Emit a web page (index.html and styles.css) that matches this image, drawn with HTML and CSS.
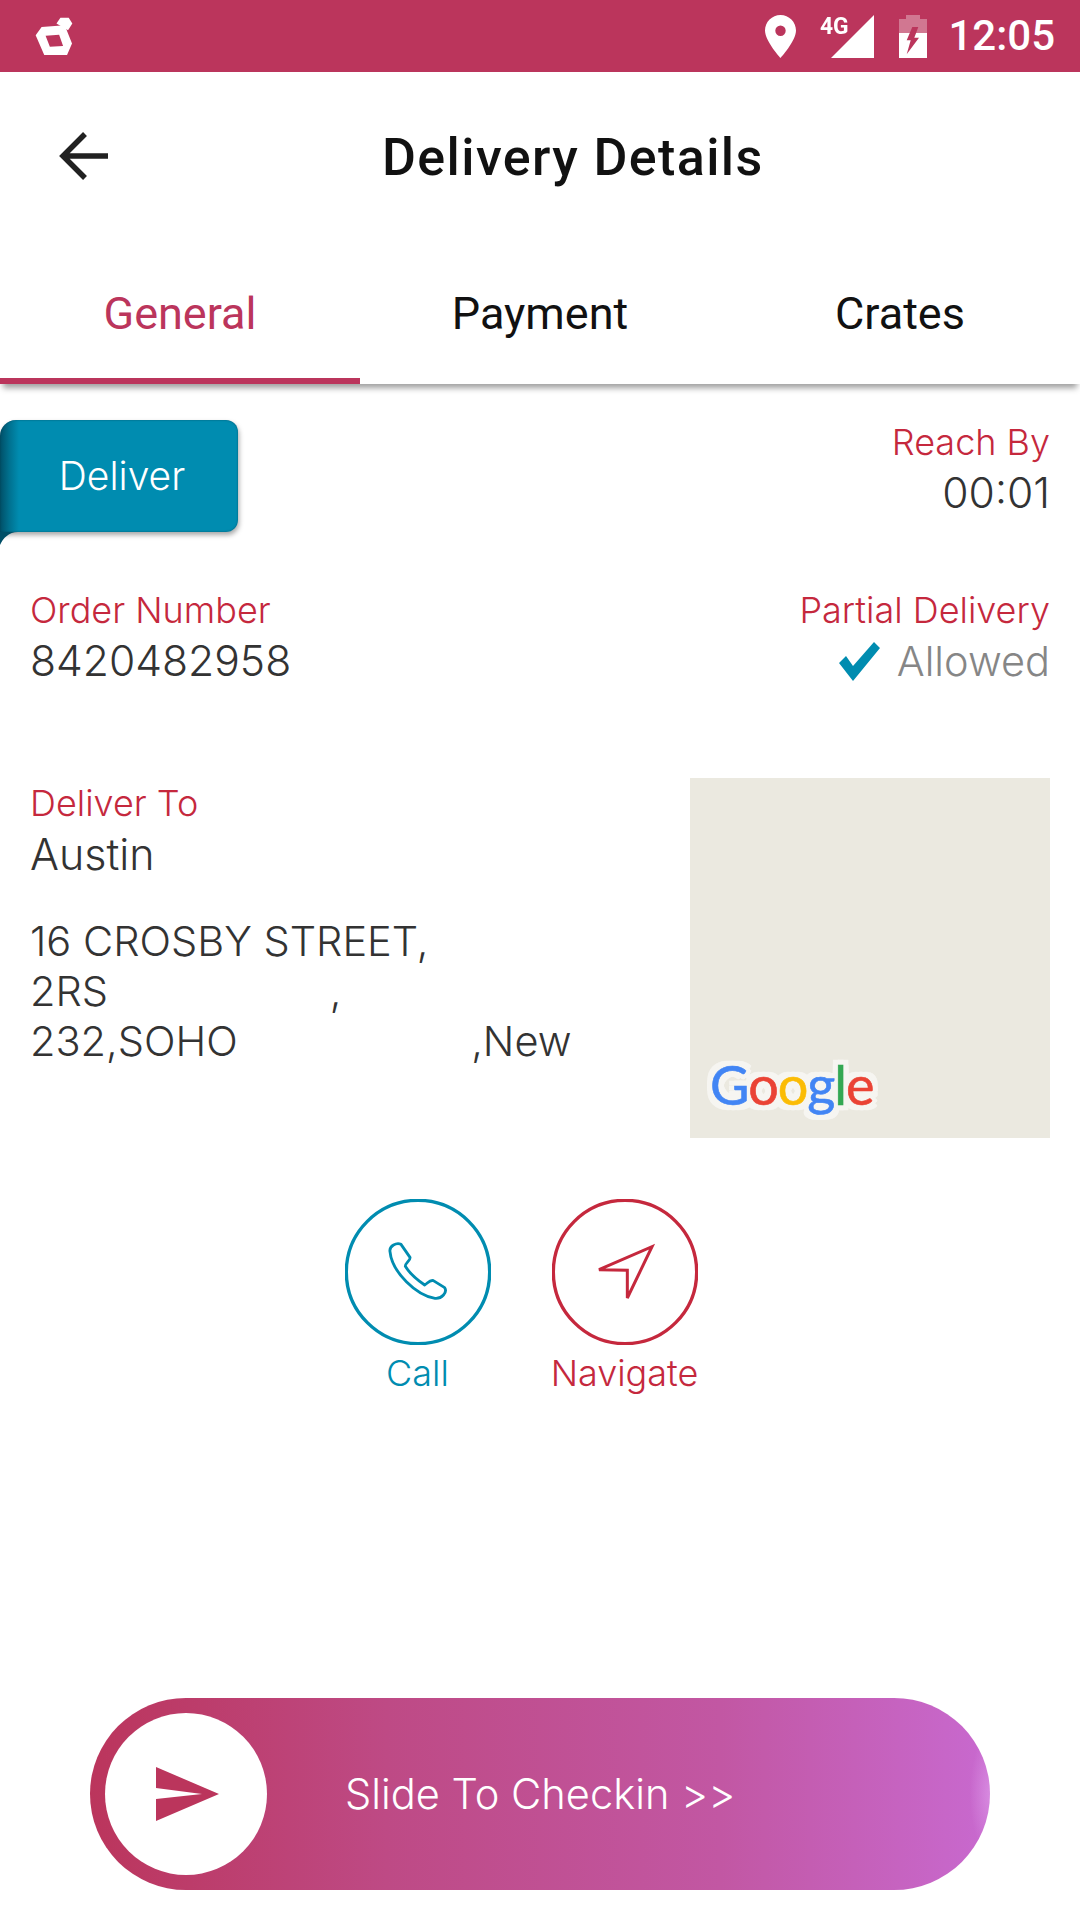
FILE: index.html
```html
<!DOCTYPE html>
<html lang="en">
<head>
<meta charset="utf-8">
<title>Delivery Details</title>
<link rel="stylesheet" href="styles.css">
</head>
<body>
<div class="screen">
  <header class="status-bar">
    <svg class="app-mark" viewBox="105 50 115 118" width="38" height="39">
      <path fill="#fff" fill-rule="evenodd" d="M107 105 L125 80 L195 75 L217 130 L202 165 L133 165 Z M137 107 L178 104 L190 138 L150 140 Z"/>
      <path fill="#fff" d="M170 70 L182 52 L207 52 L218 70 L205 90 Z"/>
    </svg>
    <span class="status-spacer"></span>
    <svg class="pin" viewBox="0 0 31 43" width="31" height="43">
      <path fill="#fff" fill-rule="evenodd" d="M15.5 0 C7 0 0 7 0 15.500 C0 26 15.500 43 15.500 43 C15.500 43 31 26 31 15.500 C31 7 24 0 15.500 0 Z M15.500 10.500 A5.200 5.200 0 1 1 15.500 20.900 A5.200 5.200 0 1 1 15.500 10.500 Z"/>
    </svg>
    <div class="signal">
      <span class="signal-label">4G</span>
      <svg class="signal-bars" viewBox="0 0 43 43" width="43" height="43"><path fill="#fff" d="M0 43 L43 0 L43 43 Z"/></svg>
    </div>
    <svg class="battery" viewBox="0 0 28 43" width="28" height="43">
      <path fill="#fff" opacity=".33" d="M0 4 H7 V0 H21 V4 H28 V18 H0 Z"/>
      <path fill="#fff" d="M0 18 H28 V43 H0 Z"/>
      <path fill="#bb355c" d="M13.300 12 H19.300 L15.300 22.700 H20 L7.700 39.300 L11.700 25.300 H7.700 Z"/>
    </svg>
    <span class="clock">12:05</span>
  </header>

  <div class="toolbar">
    <svg class="back" viewBox="0 0 52 48" width="52" height="48">
      <path fill="none" stroke="#212121" stroke-width="5.500" d="M50 24 H5 M27 2 L5 24 L27 46"/>
    </svg>
    <h1 class="title">Delivery Details</h1>
  </div>

  <nav class="tabs">
    <a class="tab tab-active">General</a>
    <a class="tab">Payment</a>
    <a class="tab">Crates</a>
  </nav>

  <main class="details">
    <section class="row-top">
      <div class="ribbon">Deliver</div>
      <div class="field field-end">
        <span class="label">Reach By</span>
        <span class="value value-digits">00:01</span>
      </div>
    </section>

    <section class="row-order">
      <div class="field">
        <span class="label">Order Number</span>
        <span class="value value-digits">8420482958</span>
      </div>
      <div class="field field-end">
        <span class="label">Partial Delivery</span>
        <span class="allowed">
          <svg class="tick" viewBox="0 0 41 39" width="41" height="39"><path fill="#008cb0" d="M0 21 L7 14 L14 24 L35 0 L41 6 L14 39 Z"/></svg>
          <span>Allowed</span>
        </span>
      </div>
    </section>

    <section class="row-address">
      <div class="address">
        <span class="label">Deliver To</span>
        <span class="value">Austin</span>
        <p class="street">16 CROSBY STREET,
2RS                   ,
232,SOHO                    ,New</p>
      </div>
      <div class="map">
        <span class="map-logo"><span class="g-blue">G</span><span class="g-red">o</span><span class="g-yellow">o</span><span class="g-blue">g</span><span class="g-green">l</span><span class="g-red">e</span></span>
      </div>
    </section>

    <section class="actions">
      <div class="action action-call">
        <svg class="action-ring" viewBox="45 60 438 438" width="146" height="146">
          <circle cx="264" cy="279" r="215" fill="none" stroke="#008cb0" stroke-width="10"/>
          <path fill="none" stroke="#008cb0" stroke-width="8.500" stroke-linejoin="round" d="M180 218 C177 200 200 190 213 196 L240 235 C243 243 225 252 226 262 C240 285 265 305 284 318 C292 314 300 301 310 305 L344 326 C353 340 335 360 315 358 C260 350 186 280 180 218 Z"/>
        </svg>
        <span class="action-label">Call</span>
      </div>
      <div class="action action-nav">
        <svg class="action-ring" viewBox="666 60 438 438" width="146" height="146">
          <circle cx="885" cy="279" r="215" fill="none" stroke="#c5283d" stroke-width="10"/>
          <path fill="none" stroke="#c5283d" stroke-width="9" d="M807 272 L966 203 L892 357 L892 274 Z"/>
        </svg>
        <span class="action-label">Navigate</span>
      </div>
    </section>
  </main>

  <div class="slider">
    <div class="knob">
      <svg viewBox="0 0 63 54" width="63" height="54"><path fill="#bb355c" d="M0 0 L63 27 L0 54 L0 32 L46 27 L0 21 Z"/></svg>
    </div>
    <span class="slider-text">Slide To Checkin &gt;&gt;</span>
  </div>
</div>
</body>
</html>
```

FILE: styles.css
```css
* { box-sizing: border-box; }

html, body {
  margin: 0;
  padding: 0;
  background: #fff;
}

.screen {
  width: 1080px;
  height: 1920px;
  display: flex;
  flex-direction: column;
  overflow: hidden;
  font-family: Inter, "Liberation Sans", sans-serif;
  font-weight: 300;
}

/* Status bar */
.status-bar {
  height: 72px;
  flex: none;
  background: #bb355c;
  display: flex;
  align-items: center;
  padding-left: 35px;
  padding-right: 25px;
}
.app-mark { flex: none; }
.status-spacer { flex: 1; }
.pin { margin-right: 25px; }
.signal { display: flex; align-items: flex-start; position: relative; width: 53px; height: 43px; justify-content: flex-end; margin-right: 25px; }
.signal-label {
  position: absolute;
  left: -1px;
  top: 0;
  font: 700 24px/22px Roboto, sans-serif;
  color: #fff;
  transform: scaleX(.95);
  transform-origin: left;
}
.battery { margin-right: 21px; }
.clock {
  font: 500 42px/72px Roboto, sans-serif;
  color: #fff;
}

/* Title row */
.toolbar {
  height: 160px;
  flex: none;
  display: flex;
  align-items: center;
  padding-left: 58px;
  padding-top: 8px;
}
.back { flex: none; }
.title {
  margin: 4px 0 0 272px;
  font: 500 52px/60px Roboto, sans-serif;
  letter-spacing: 1.4px;
  color: #111;
}

/* Tabs */
.tabs {
  height: 152px;
  flex: none;
  display: flex;
  box-shadow: 0 7px 6px -3px rgba(0,0,0,.38);
}
.tab {
  flex: 1;
  display: flex;
  align-items: center;
  justify-content: center;
  font: 400 45px/1 Roboto, sans-serif;
  color: #111;
  padding-top: 17px;
  border-bottom: 6px solid transparent;
}
.tab-active {
  color: #bb355c;
  border-bottom-color: #bb355c;
}

/* Details */
.details {
  flex: 1;
  padding: 0 30px;
  display: flex;
  flex-direction: column;
}
.field { display: flex; flex-direction: column; }
.field-end { align-items: flex-end; }
.label {
  font-size: 36px;
  line-height: 44px;
  color: #c5283d;
}
.value {
  font-size: 43px;
  line-height: 58px;
  color: #333;
}
.value-digits { font-size: 42.600px; }

.row-top {
  display: flex;
  justify-content: space-between;
  align-items: flex-start;
  margin-left: -30px;
  padding-top: 36px;
}
.ribbon {
  position: relative;
  width: 238px;
  height: 112px;
  border-radius: 16px 12px 12px 0;
  background: linear-gradient(90deg, #004f67, #00708e 9px, #008cb0 19px);
  box-shadow: 1px 3px 5px rgba(0,0,0,.35), inset 0 0 2px rgba(0,60,80,.7);
  color: #fff;
  font-size: 39px;
  font-weight: 300;
  display: flex;
  align-items: center;
  justify-content: center;
  padding-left: 6px;
  padding-bottom: 2px;
}
/* the fold under the ribbon's left end */
.ribbon::after {
  content: "";
  position: absolute;
  left: 0;
  top: 112px;
  width: 18px;
  height: 13px;
  background: #004f67;
  clip-path: path('M0 13 C3 6 9 0 18 0 L0 0 Z');
}

.row-order {
  display: flex;
  justify-content: space-between;
  margin-top: 56px;
}
.allowed {
  display: flex;
  align-items: center;
  gap: 17px;
  font-size: 41.500px;
  line-height: 58px;
  color: #868686;
}
.tick { flex: none; }

.row-address {
  display: flex;
  justify-content: space-between;
  margin-top: 88px;
}
.address { display: flex; flex-direction: column; padding-top: 3px; }
.street {
  margin: 33px 0 0;
  font-size: 41.500px;
  line-height: 50px;
  color: #333;
  white-space: pre;
}
.map {
  width: 360px;
  height: 360px;
  background: #ebe9e0;
  display: flex;
  align-items: flex-end;
  padding: 0 0 20px 20px;
}
.map-logo {
  font: 400 54px/66px Lato, sans-serif;
  letter-spacing: -1px;
  -webkit-text-stroke: .6px currentColor;
  filter: drop-shadow(5px 0 0 #f6f5f1) drop-shadow(-5px 0 0 #f6f5f1) drop-shadow(0 5px 0 #f6f5f1) drop-shadow(0 -5px 0 #f6f5f1);
}
.g-blue { color: #4285f4; }
.g-red { color: #ea4335; }
.g-yellow { color: #fbbc05; }
.g-green { color: #34a853; }

/* Call and navigate */
.actions {
  display: flex;
  justify-content: center;
  gap: 61px;
  margin-top: 61px;
  padding-right: 38px;
}
.action { display: flex; flex-direction: column; align-items: center; width: 146px; }
.action-ring { display: block; }
.action-label { font-size: 36px; line-height: 44px; white-space: nowrap; margin-top: 6px; }
.action-call .action-label { color: #008cb0; }
.action-nav .action-label { color: #c5283d; }

/* Slide to check in */
.slider {
  flex: none;
  width: 900px;
  height: 192px;
  margin: 0 0 30px 90px;
  border-radius: 96px;
  background:
    radial-gradient(ellipse 20px 60px at 100% 50%, rgba(225,160,235,.6), rgba(225,160,235,0) 100%),
    linear-gradient(90deg, #bb355c 0%, #be4a85 33%, #c257a3 70%, #c869cf 100%);
  display: flex;
  align-items: center;
  padding-left: 15px;
}
.knob {
  width: 162px;
  height: 162px;
  border-radius: 50%;
  background: #fff;
  display: flex;
  align-items: center;
  justify-content: center;
  padding-left: 2px;
  flex: none;
}
.slider-text {
  margin-left: 78px;
  font-size: 41.600px;
  color: #fff;
  white-space: nowrap;
}
```
